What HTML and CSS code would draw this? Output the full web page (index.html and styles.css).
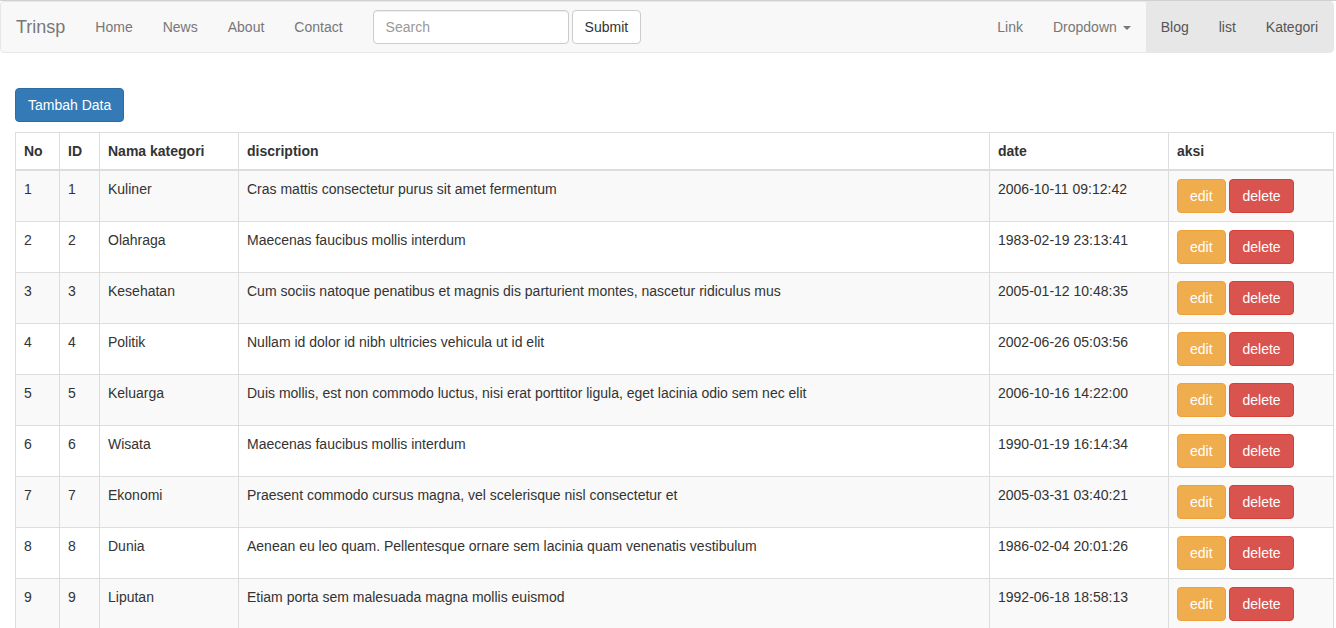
FILE: index.html
```html
<!DOCTYPE html>
<html>
<head>
<meta charset="utf-8">
<title>Trinsp</title>
<link rel="stylesheet" href="styles.css">
</head>
<body>
<div class="page">
  <nav class="navbar">
    <a class="brand" href="#">Trinsp</a>
    <ul class="nav">
      <li><a href="#">Home</a></li>
      <li><a href="#">News</a></li>
      <li><a href="#">About</a></li>
      <li><a href="#">Contact</a></li>
    </ul>
    <form class="nav-form">
      <input class="form-control" type="text" placeholder="Search">
      <button class="btn btn-default" type="button">Submit</button>
    </form>
    <ul class="nav nav-right">
      <li><a href="#">Link</a></li>
      <li><a href="#">Dropdown <span class="caret"></span></a></li>
    </ul>
    <ul class="nav nav-active">
      <li><a href="#">Blog</a></li>
      <li><a href="#">list</a></li>
      <li><a href="#">Kategori</a></li>
    </ul>
  </nav>

  <div class="content">
    <div class="toolbar">
      <button class="btn btn-primary" type="button">Tambah Data</button>
    </div>
    <table class="table">
      <colgroup>
        <col class="c-no"><col class="c-id"><col class="c-nama"><col class="c-desc"><col class="c-date"><col class="c-aksi">
      </colgroup>
      <thead>
        <tr><th>No</th><th>ID</th><th>Nama kategori</th><th>discription</th><th>date</th><th>aksi</th></tr>
      </thead>
      <tbody>
        <tr><td>1</td><td>1</td><td>Kuliner</td><td>Cras mattis consectetur purus sit amet fermentum</td><td>2006-10-11 09:12:42</td><td class="aksi"><button class="btn btn-warning">edit</button> <button class="btn btn-danger">delete</button></td></tr>
        <tr><td>2</td><td>2</td><td>Olahraga</td><td>Maecenas faucibus mollis interdum</td><td>1983-02-19 23:13:41</td><td class="aksi"><button class="btn btn-warning">edit</button> <button class="btn btn-danger">delete</button></td></tr>
        <tr><td>3</td><td>3</td><td>Kesehatan</td><td>Cum sociis natoque penatibus et magnis dis parturient montes, nascetur ridiculus mus</td><td>2005-01-12 10:48:35</td><td class="aksi"><button class="btn btn-warning">edit</button> <button class="btn btn-danger">delete</button></td></tr>
        <tr><td>4</td><td>4</td><td>Politik</td><td>Nullam id dolor id nibh ultricies vehicula ut id elit</td><td>2002-06-26 05:03:56</td><td class="aksi"><button class="btn btn-warning">edit</button> <button class="btn btn-danger">delete</button></td></tr>
        <tr><td>5</td><td>5</td><td>Keluarga</td><td>Duis mollis, est non commodo luctus, nisi erat porttitor ligula, eget lacinia odio sem nec elit</td><td>2006-10-16 14:22:00</td><td class="aksi"><button class="btn btn-warning">edit</button> <button class="btn btn-danger">delete</button></td></tr>
        <tr><td>6</td><td>6</td><td>Wisata</td><td>Maecenas faucibus mollis interdum</td><td>1990-01-19 16:14:34</td><td class="aksi"><button class="btn btn-warning">edit</button> <button class="btn btn-danger">delete</button></td></tr>
        <tr><td>7</td><td>7</td><td>Ekonomi</td><td>Praesent commodo cursus magna, vel scelerisque nisl consectetur et</td><td>2005-03-31 03:40:21</td><td class="aksi"><button class="btn btn-warning">edit</button> <button class="btn btn-danger">delete</button></td></tr>
        <tr><td>8</td><td>8</td><td>Dunia</td><td>Aenean eu leo quam. Pellentesque ornare sem lacinia quam venenatis vestibulum</td><td>1986-02-04 20:01:26</td><td class="aksi"><button class="btn btn-warning">edit</button> <button class="btn btn-danger">delete</button></td></tr>
        <tr><td>9</td><td>9</td><td>Liputan</td><td>Etiam porta sem malesuada magna mollis euismod</td><td>1992-06-18 18:58:13</td><td class="aksi"><button class="btn btn-warning">edit</button> <button class="btn btn-danger">delete</button></td></tr>
      </tbody>
    </table>
  </div>
</div>
</body>
</html>
```

FILE: styles.css
```css
* { box-sizing: border-box; }
html, body { margin: 0; padding: 0; }
body {
  font-family: "Liberation Sans", Arial, Helvetica, sans-serif;
  font-size: 14px;
  line-height: 20px;
  color: #333;
  background: #fff;
  border-top: 1px solid #d0d0d0;
}
.page { margin-right: 2px; }

.navbar {
  display: flex;
  align-items: stretch;
  height: 52px;
  background: #f8f8f8;
  border: 1px solid #e7e7e7;
  border-radius: 4px;
  margin-bottom: 20px;
  overflow: hidden;
}
.brand {
  display: block;
  padding: 15px 15px;
  font-size: 18px;
  line-height: 20px;
  color: #777;
  text-decoration: none;
}
.nav {
  display: flex;
  list-style: none;
  margin: 0;
  padding: 0;
}
.nav a {
  display: block;
  padding: 15px 15px;
  line-height: 20px;
  color: #777;
  text-decoration: none;
}
.nav-right { margin-left: auto; }
.nav-active { background: #e7e7e7; }
.nav-active a { color: #555; }
.caret {
  display: inline-block;
  width: 0;
  height: 0;
  margin-left: 2px;
  vertical-align: middle;
  border-top: 4px solid #777;
  border-left: 4px solid transparent;
  border-right: 4px solid transparent;
}
.nav-form {
  display: flex;
  align-items: center;
  gap: 3px;
  padding: 0 15px;
  margin: 0;
}
.form-control {
  width: 196px;
  height: 34px;
  padding: 6px 12px;
  font-family: inherit;
  font-size: 14px;
  color: #555;
  background: #fff;
  border: 1px solid #ccc;
  border-radius: 4px;
  box-shadow: inset 0 1px 1px rgba(0,0,0,.075);
}
.form-control::placeholder { color: #999; }

.btn {
  display: inline-block;
  height: 34px;
  padding: 6px 12px;
  font-family: inherit;
  font-size: 14px;
  line-height: 20px;
  border: 1px solid transparent;
  border-radius: 4px;
  cursor: pointer;
  vertical-align: middle;
}
.btn-default { background: #fff; border-color: #ccc; color: #333; }
.btn-primary { background: #337ab7; border-color: #2e6da4; color: #fff; }
.btn-warning { background: #f0ad4e; border-color: #eea236; color: #fff; }
.btn-danger { background: #d9534f; border-color: #d43f3a; color: #fff; }

.content { padding: 0 0 0 15px; }
.toolbar { padding-top: 15px; margin-bottom: 10px; }

.table {
  width: 100%;
  table-layout: fixed;
  border-collapse: collapse;
  border: 1px solid #ddd;
}
.c-no { width: 44px; }
.c-id { width: 40px; }
.c-nama { width: 139px; }
.c-desc { width: 751px; }
.c-date { width: 179px; }
.table th, .table td {
  padding: 8px;
  line-height: 20px;
  text-align: left;
  vertical-align: top;
  border: 1px solid #ddd;
  white-space: nowrap;
  overflow: hidden;
}
.table thead th { border-bottom: 2px solid #ddd; font-weight: bold; }
.table tbody tr:nth-child(odd) { background: #f9f9f9; }
.table td.aksi { padding-top: 8px; padding-bottom: 8px; }
.table td.aksi .btn { vertical-align: top; }
```
